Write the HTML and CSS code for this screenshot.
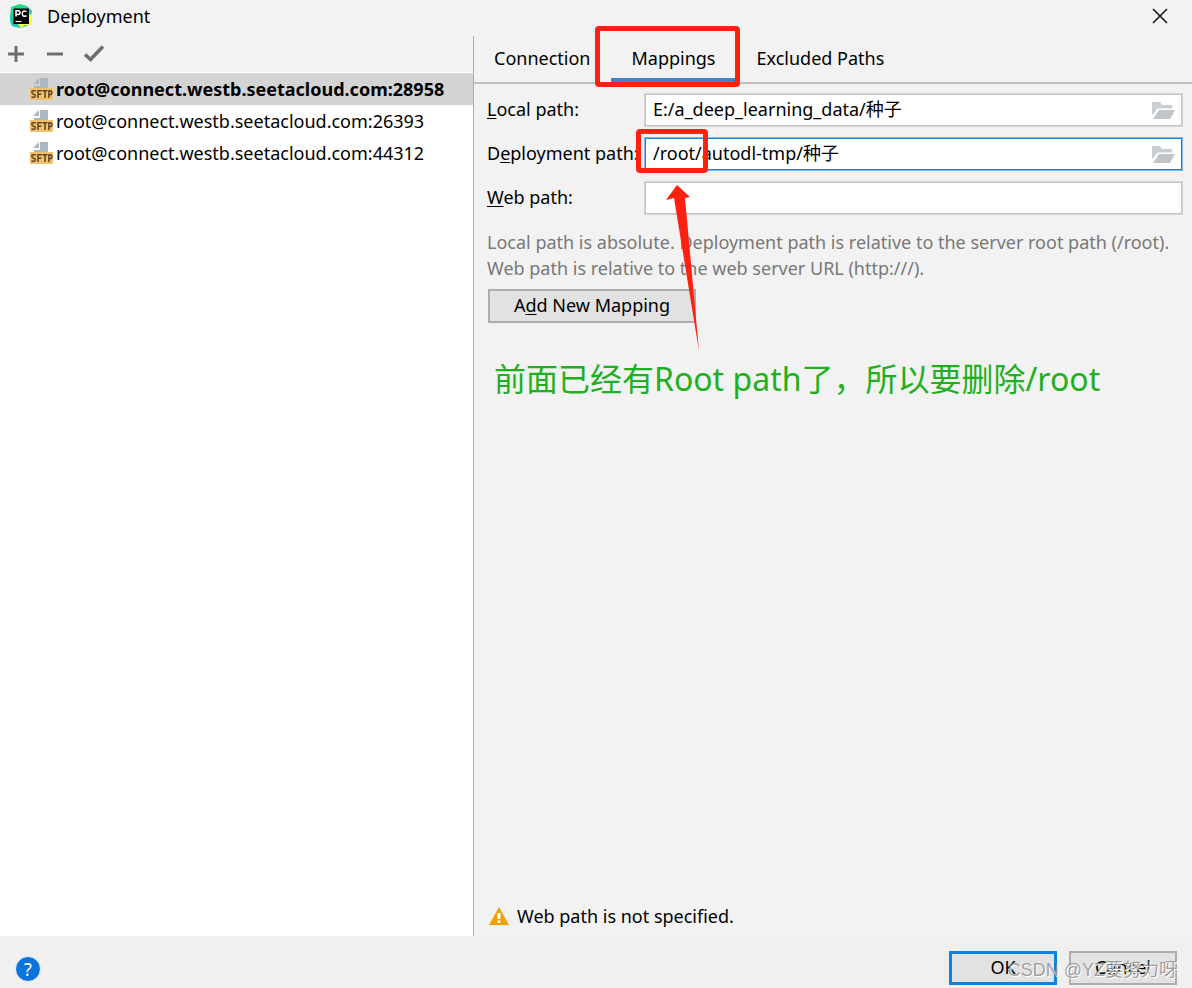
FILE: index.html
```html
<!DOCTYPE html>
<html lang="en">
<head>
<meta charset="utf-8">
<title>Deployment</title>
<link rel="stylesheet" href="styles.css">
</head>
<body>
<svg class="defs" aria-hidden="true">
  <symbol id="sftp" viewBox="0 0 23 24">
    <path d="M10 1h8v11H4V9h6z" fill="#adb7be"/>
    <path d="M9 1v6H3z" fill="#adb7be"/>
    <rect y="11" width="23" height="12" fill="#f4bf6c"/>
    <g fill="none" stroke="#5c4526" stroke-width="1.5">
      <path d="M5.800 13.800H3.200Q1.800 13.800 1.800 15.200Q1.800 16.500 3.400 16.900Q5.200 17.300 5.200 18.700Q5.200 20.200 3.600 20.200H1.400M8 21v-7.200h3.800M8 17.200h3.300M12.500 13.800h5M15 13.800V21M18.900 21v-7.200h1.200q1.700 0 1.700 1.900t-1.700 1.900h-1"/>
    </g>
  </symbol>
  <symbol id="folder" viewBox="0 0 23 18">
    <path d="M0 14V1h8l2 3h10v4H6z" fill="#c9ced2"/>
    <path d="M1 18L7 9h16l-5 9z" fill="#bfc5c9"/>
    <path d="M0 16L5.500 8H20" fill="none" stroke="#fff"/>
  </symbol>
</svg>
<div class="dialog">
  <header class="titlebar">
    <svg class="app-icon" viewBox="0 0 24 24" aria-hidden="true">
      <path d="M2 3L11 0l7 2 5 5-3 14-8 3-9-2-2-6z" fill="#21d789"/>
      <path d="M1 9l3 10 8 5-9-2-2-5z" fill="#18c5c0"/>
      <path d="M17 2l6 5-3 4z" fill="#1fc8df"/>
      <path d="M20 9l3 4v8h-7l-4 3-3-4z" fill="#fcf84a"/>
      <rect x="4.500" y="4.500" width="15.500" height="15.500" fill="#050505"/>
      <path d="M7 12.500V6.800h2q2 0 2 1.800t-2 1.800H7M17.500 7.500q-4-1.800-4.300 2.200q.3 3.600 4.300 2" fill="none" stroke="#fff" stroke-width="1.500"/>
      <path d="M6.500 17.500h6" stroke="#fff" stroke-width="1.200"/>
    </svg>
    <h1 class="title">Deployment</h1>
    <button class="close" aria-label="Close"><svg viewBox="0 0 16 16"><path d="M1 1l14 14M15 1L1 15" fill="none" stroke="#111" stroke-width="1.500"/></svg></button>
  </header>
  <main class="content">
    <aside class="sidebar">
      <div class="toolbar">
        <button class="tool" aria-label="Add"><svg viewBox="0 0 20 20"><path d="M2 10h16M10 2v16" stroke="#6e6e6e" stroke-width="3"/></svg></button>
        <button class="tool" aria-label="Remove"><svg viewBox="0 0 20 20"><path d="M2 10h16" stroke="#6e6e6e" stroke-width="3"/></svg></button>
        <button class="tool" aria-label="Use as default"><svg viewBox="0 0 20 20"><path d="M1 10.500l5.500 5L19 2.500" fill="none" stroke="#6e6e6e" stroke-width="3.600"/></svg></button>
      </div>
      <ul class="servers">
        <li class="server selected"><svg><use href="#sftp"/></svg>root@connect.westb.seetacloud.com:28958</li>
        <li class="server"><svg><use href="#sftp"/></svg>root@connect.westb.seetacloud.com:26393</li>
        <li class="server"><svg><use href="#sftp"/></svg>root@connect.westb.seetacloud.com:44312</li>
      </ul>
    </aside>
    <section class="panel">
      <nav class="tabs">
        <button class="tab">Connection</button>
        <button class="tab active">Mappings</button>
        <button class="tab">Excluded Paths</button>
      </nav>
      <div class="form">
        <label for="local"><u>L</u>ocal path:</label>
        <div class="field"><input id="local" type="text" value="E:/a_deep_learning_data/种子"><button class="browse" aria-label="Browse local path"><svg><use href="#folder"/></svg></button></div>
        <label for="deploy">D<u>e</u>ployment path:</label>
        <div class="field focused"><input id="deploy" type="text" value="/root/autodl-tmp/种子"><button class="browse" aria-label="Browse deployment path"><svg><use href="#folder"/></svg></button></div>
        <label for="web"><u>W</u>eb path:</label>
        <div class="field"><input id="web" type="text"></div>
      </div>
      <p class="hint">Local path is absolute. Deployment path is relative to the server root path (/root).<br>Web path is relative to the web server URL (http:///).</p>
      <button class="button add">A<u>d</u>d New Mapping</button>
      <p class="note">前面已经有Root path了，所以要删除/root</p>
      <p class="warning"><svg viewBox="0 0 20 18" aria-hidden="true"><path d="M10 0l10 18H0z" fill="#eda200"/><path d="M8.500 6h3v6h-3zM8.500 13.500h3v2.500h-3z" fill="#fff"/></svg>Web path is not specified.</p>
      <div class="mark mark-tab"></div>
      <div class="mark mark-root"></div>
      <svg class="arrow" viewBox="0 0 34 166" aria-hidden="true"><path d="M11 0L24 12 19 13 33 166 8 13 0 15z" fill="#ff2010"/></svg>
    </section>
  </main>
  <footer class="footer">
    <button class="help" aria-label="Help">?</button>
    <button class="button primary">OK</button>
    <button class="button">Cancel</button>
    <span class="watermark">CSDN @YZ要努力呀</span>
  </footer>
</div>
</body>
</html>
```
FILE: styles.css
```css
* { box-sizing: border-box; }

body {
  margin: 0;
  background: #f2f2f2;
  color: #000;
  font: 18px/24px "Noto Sans", "Noto Sans CJK SC", sans-serif;
}

button, input { font: inherit; color: inherit; }
button { border: 0; padding: 0; background: none; }
h1, p, ul { margin: 0; padding: 0; font-size: inherit; font-weight: normal; }
svg { display: block; flex: none; }
u { text-underline-offset: 2px; text-decoration-skip-ink: none; }

.defs { position: absolute; width: 0; height: 0; }

.dialog { display: flex; flex-direction: column; min-height: 100vh; }

.titlebar { display: flex; align-items: center; height: 36px; padding: 0 24px 5px 9px; }
.app-icon { width: 24px; height: 24px; }
.title { flex: 1; margin-left: 14px; }
.close svg { width: 16px; height: 16px; }

.content { display: flex; flex: 1; }

.sidebar {
  display: flex;
  flex-direction: column;
  width: 474px;
  border-right: 1px solid #adadad;
  background: #fff;
}
.toolbar { display: flex; gap: 19px; height: 36px; padding: 8px 6px; background: #f2f2f2; }
.tool svg { width: 20px; height: 20px; }
.servers { list-style: none; padding-top: 1px; }
.server { display: flex; align-items: center; gap: 3px; height: 32px; padding-left: 30px; white-space: nowrap; }
.server svg { width: 23px; height: 24px; }
.selected { background: #d4d4d4; font-weight: 700; }

.panel { position: relative; display: flex; flex-direction: column; flex: 1; min-width: 0; }
.tabs { display: flex; height: 48px; border-bottom: 2px solid #bfbfbf; }
.tab { padding: 2px 21px 0 20px; border-bottom: 4px solid transparent; }
.active { border-bottom-color: #4083c9; }

.form {
  display: grid;
  grid-template-columns: 157px 1fr;
  row-gap: 10px;
  align-items: center;
  padding: 9px 9px 0 13px;
}
.form label { padding-bottom: 2px; white-space: nowrap; }
.field { display: flex; align-items: center; height: 34px; padding: 0 7px; border: 1px solid #d4d4d4; background: #fff; box-shadow: inset 0 0 0 1px #c4c4c4; }
.field input { flex: 1; min-width: 0; border: 0; padding: 0 1px 2px; outline: 0; background: none; }
.focused { border-color: #7db8e8; box-shadow: inset 0 0 0 1px #1883d7; }
.browse svg { width: 23px; height: 18px; }

.hint { margin: 14px 0 0 13px; color: #787878; line-height: 26px; white-space: nowrap; }

.button { min-width: 108px; height: 34px; padding-bottom: 2px; border: 2px solid #adadad; background: #e2e2e2; }
.add { align-self: flex-start; margin: 8px 0 0 14px; padding: 0 24px 2px; }

.note { margin: 32px 20px 0; color: #1eb01e; font-size: 32px; line-height: 48px; }

.warning { display: flex; align-items: center; gap: 8px; margin: auto 0 8px 15px; }
.warning svg { width: 20px; height: 18px; }

.mark { position: absolute; border: 5px solid #ff2010; border-radius: 4px; }
.mark-tab { left: 121px; top: -10px; width: 145px; height: 61px; }
.mark-root { left: 162px; top: 93px; width: 72px; height: 44px; }
.arrow { position: absolute; left: 192px; top: 149px; width: 34px; height: 166px; }

.footer { position: relative; display: flex; align-items: center; gap: 12px; height: 52px; padding: 11px 15px 0; background: #f0f0f0; }
.help { width: 26px; height: 26px; margin: 2px auto 0 0; border: 1px solid #f2f2f2; border-radius: 50%; background: #0a74da; color: #fff; }
.primary { border: 3px solid #0a84e0; }
.watermark { position: absolute; right: 15px; bottom: 6px; color: #8c8c8ccc; font-family: "Liberation Sans", "Noto Sans CJK SC", sans-serif; text-shadow: 1px 1px #fff; }
```
